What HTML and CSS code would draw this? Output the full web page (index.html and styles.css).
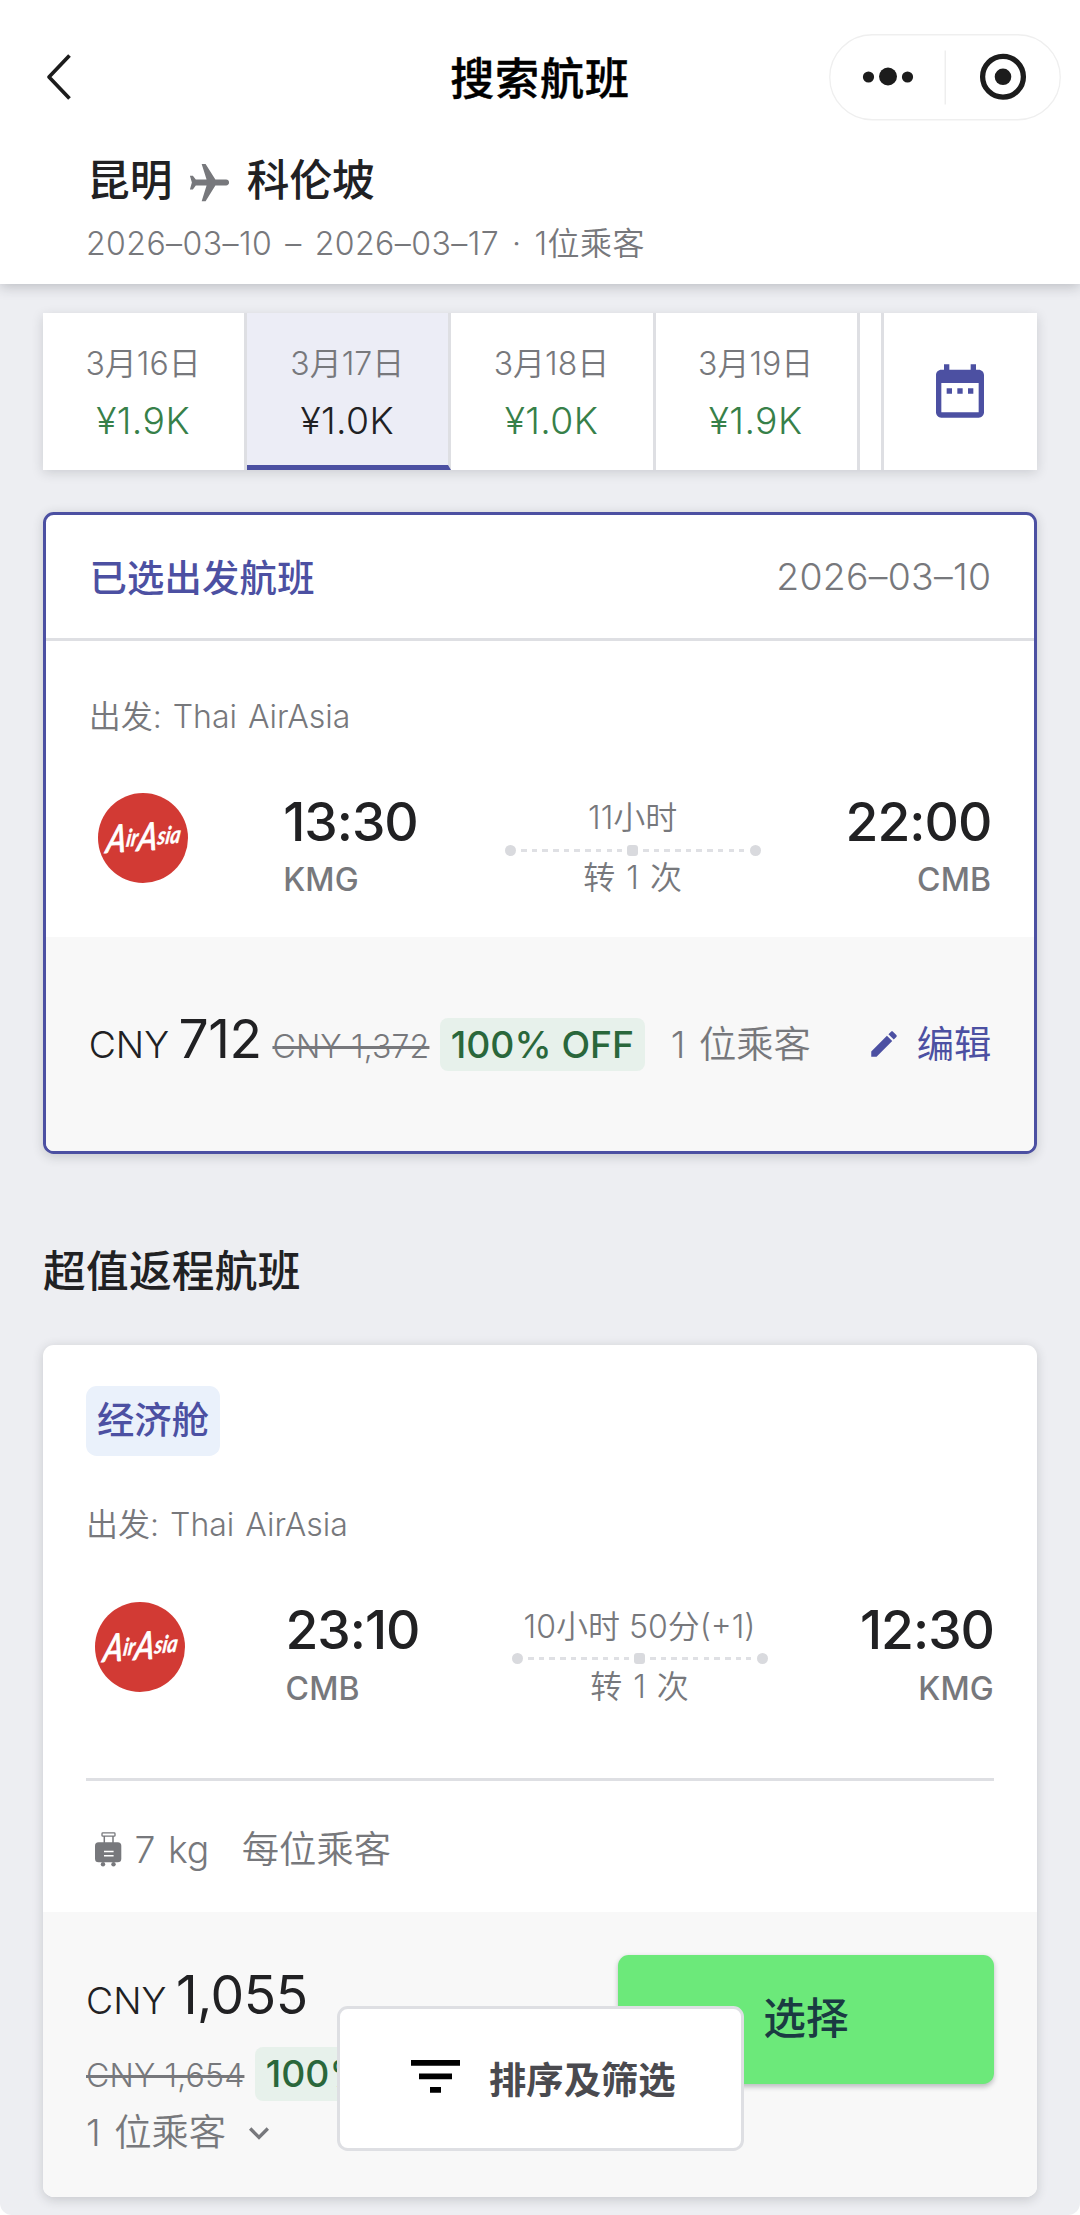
FILE: index.html
```html
<!DOCTYPE html>
<html lang="zh-CN">
<head>
<meta charset="utf-8">
<title>搜索航班</title>
<link rel="stylesheet" href="styles.css">
</head>
<body>
<div class="app">
  <header class="header">
    <div class="nav">
      <svg class="back" width="26" height="48" viewBox="0 0 26 48" fill="none" stroke="#1c1c1c" stroke-width="3.7"><path d="M23.5 2.5 3 24l20.500 21.500" stroke-linejoin="round"/></svg>
      <h1 class="nav-title">搜索航班</h1>
      <svg class="capsule" width="232" height="87" viewBox="0 0 232 87">
        <rect x=".75" y=".75" width="230.500" height="85" rx="42.500" fill="none" stroke="#efefef" stroke-width="1.300"/>
        <g fill="#1c1c1c"><circle cx="39.500" cy="43" r="5.600"/><circle cx="59" cy="42.500" r="9"/><circle cx="78.500" cy="43" r="5.600"/><circle cx="174" cy="42.800" r="8.300"/></g>
        <path d="M116.300 16.500v54" stroke="#eee" stroke-width="1.500"/>
        <circle cx="174" cy="42.800" r="20.400" fill="none" stroke="#1c1c1c" stroke-width="5.300"/>
      </svg>
    </div>
    <div class="route">
      <span>昆明</span>
      <svg class="plane" width="47" height="47" viewBox="0 0 24 24"><path transform="rotate(90 12 12)" d="M21 16v-2l-8-5V3.500c0-.83-.67-1.500-1.500-1.500S10 2.670 10 3.500V9l-8 5v2l8-2.500V19l-2 1.500V22l3.500-1 3.500 1v-1.500L13 19v-5.500l8 2.500z" fill="#77787c"/></svg>
      <span>科伦坡</span>
    </div>
    <p class="summary">2026–03–10 – 2026–03–17 · 1位乘客</p>
  </header>

  <main class="main">
    <div class="dates">
      <div class="date"><span class="day">3月16日</span><span class="fare">¥1.9K</span></div>
      <div class="date date-on"><span class="day">3月17日</span><span class="fare">¥1.0K</span></div>
      <div class="date"><span class="day">3月18日</span><span class="fare">¥1.0K</span></div>
      <div class="date"><span class="day">3月19日</span><span class="fare">¥1.9K</span></div>
      <div class="date-rest"></div>
      <div class="calendar"><svg width="64" height="64" viewBox="0 0 24 24" fill="#4c50a2"><path d="M9 11H7v2h2v-2zm4 0h-2v2h2v-2zm4 0h-2v2h2v-2zm2-7h-1V2h-2v2H8V2H6v2H5c-1.110 0-1.990.9-1.990 2L3 20c0 1.100.89 2 2 2h14c1.100 0 2-.9 2-2V6c0-1.100-.9-2-2-2zm0 16H5V9h14v11z"/></svg></div>
    </div>

    <section class="card card-picked">
      <div class="picked-head"><h2 class="picked-title">已选出发航班</h2><span class="picked-date">2026–03–10</span></div>
      <div class="picked-body">
        <p class="carrier">出发: Thai AirAsia</p>
        <div class="leg">
          <svg class="logo" width="90" height="90" viewBox="0 0 90 90">
            <circle cx="45" cy="45" r="45" fill="#d23a34"/>
            <g transform="translate(8 55) rotate(-4) skewX(-12)"><text class="logo-text" textLength="74" lengthAdjust="spacingAndGlyphs"><tspan class="logo-cap" dy="5">A</tspan><tspan dy="-5">ir</tspan><tspan class="logo-cap" dy="5">A</tspan><tspan dy="-5">sia</tspan></text></g>
          </svg>
          <div class="stop"><span class="time">13:30</span><span class="code">KMG</span></div>
          <div class="path"><span>11小时</span><div class="line"><i class="dot"></i><i class="dash"></i><i class="dot dot-mid"></i><i class="dash"></i><i class="dot"></i></div><span class="via">转 1 次</span></div>
          <div class="stop stop-end"><span class="time">22:00</span><span class="code">CMB</span></div>
        </div>
      </div>
      <div class="picked-foot">
        <span class="currency">CNY</span><span class="amount">712</span><s class="was">CNY 1,372</s><span class="badge">100% OFF</span><span class="pax">1 位乘客</span>
        <a class="edit"><svg class="pencil" width="34" height="34" viewBox="0 0 24 24"><path d="M3 17.250V21h3.750L17.810 9.940l-3.750-3.750L3 17.250zM20.710 7.040c.39-.39.39-1.020 0-1.410l-2.340-2.340c-.39-.39-1.020-.39-1.410 0l-1.830 1.830 3.750 3.750 1.830-1.830z" fill="#4c50a2"/></svg>编辑</a>
      </div>
    </section>

    <h2 class="section-title">超值返程航班</h2>

    <section class="card card-offer">
      <div class="offer-body">
        <span class="cabin">经济舱</span>
        <p class="carrier">出发: Thai AirAsia</p>
        <div class="leg leg-wide">
          <svg class="logo" width="90" height="90" viewBox="0 0 90 90">
            <circle cx="45" cy="45" r="45" fill="#d23a34"/>
            <g transform="translate(8 55) rotate(-4) skewX(-12)"><text class="logo-text" textLength="74" lengthAdjust="spacingAndGlyphs"><tspan class="logo-cap" dy="5">A</tspan><tspan dy="-5">ir</tspan><tspan class="logo-cap" dy="5">A</tspan><tspan dy="-5">sia</tspan></text></g>
          </svg>
          <div class="stop"><span class="time">23:10</span><span class="code">CMB</span></div>
          <div class="path"><span>10小时 50分(+1)</span><div class="line"><i class="dot"></i><i class="dash"></i><i class="dot dot-mid"></i><i class="dash"></i><i class="dot"></i></div><span class="via">转 1 次</span></div>
          <div class="stop stop-end"><span class="time">12:30</span><span class="code">KMG</span></div>
        </div>
        <div class="bags">
          <svg width="27" height="35" viewBox="0 0 27 35"><rect x="7" y=".9" width="13" height="3.300" rx=".8" fill="none" stroke="#77787c" stroke-width="1.300"/><path d="M9.300 4v7M18 4v7" stroke="#77787c" stroke-width="1.500"/><rect y="10.300" width="26.300" height="20" rx="3.600" fill="#77787c"/><circle cx="8" cy="32.300" r="2.200" fill="#77787c"/><circle cx="18.500" cy="32.300" r="2.200" fill="#77787c"/><path d="M9 19.500h9.600M9 23.800h9.600" stroke="#fff" stroke-width="1.500"/></svg>
          <span class="weight">7 kg</span><span>每位乘客</span>
        </div>
      </div>
      <div class="offer-foot">
        <div class="offer-price">
          <div class="price-row"><span class="currency">CNY</span><span class="amount">1,055</span></div>
          <div class="price-row price-was"><s class="was">CNY 1,654</s><span class="badge">100% OFF</span></div>
          <div class="pax-row"><span>1 位乘客</span><svg width="40" height="40" viewBox="0 0 24 24"><path d="M16.590 8.590 12 13.170 7.410 8.590 6 10l6 6 6-6z" fill="#77787c"/></svg></div>
        </div>
        <button class="select">选择</button>
      </div>
    </section>
  </main>

  <button class="filter"><svg width="49" height="33" viewBox="0 0 49 33"><path d="M0 0h49v5.700H0zM8 13.500h33v5.700H8zM19 27h11v5.700H19z"/></svg>排序及筛选</button>
</div>
</body>
</html>
```
FILE: styles.css
```css
* { box-sizing: border-box; }
body {
  margin: 0;
  background: #fff;
  color: #212123;
  font-family: Inter, "Noto Sans CJK SC", sans-serif;
  font-weight: 350;
}
h1, h2, p { margin: 0; font-weight: 500; }
button { font-family: inherit; }
svg { display: block; flex: none; }
.app {
  position: relative;
  width: 1080px;
  height: 2215px;
  overflow: hidden;
  border-radius: 0 0 12px 12px;
  background: #edeef2;
}

/* header */
.header {
  position: relative;
  height: 284px;
  padding-top: 34px;
  background: #fff;
  box-shadow: 0 3px 12px rgba(37, 42, 49, .24);
}
.nav { display: grid; grid-template-columns: 1fr auto 1fr; align-items: center; height: 87px; }
.back { margin: 0 0 1px 46px; }
.nav-title { padding-top: 2px; color: #000; font-size: 44px; line-height: 60px; letter-spacing: .9px; font-weight: 500; -webkit-text-stroke: .4px #000; }
.capsule { margin-right: 19px; justify-self: end; }
.route { display: flex; align-items: center; height: 60px; margin-top: 30px; padding-left: 87px; font-size: 42.670px; font-weight: 500; line-height: 60px; }
.plane { margin: 4px 14px 0 13.500px; }
.summary { margin-top: 9px; padding-left: 86px; color: #77787c; font-size: 32px; font-weight: 350; line-height: 48px; letter-spacing: .45px; word-spacing: 3.500px; }

/* date strip */
.main { padding: 29.300px 43px 0; }
.dates { display: flex; height: 156.300px; background: #fff; box-shadow: 0 2.670px 11px rgba(37, 42, 49, .17); }
.date { display: flex; flex-direction: column; align-items: center; gap: 5px; width: 204.200px; padding-top: 27px; border-right: 3px solid #dedfe3; }
.date-on { border-bottom: 5.500px solid #4c50a2; background: #ecedf6; }
.day { margin-right: 1px; color: #77787c; font-size: 32px; line-height: 48px; }
.fare { margin-right: 1px; color: #378049; font-size: 37.330px; line-height: 56px; letter-spacing: .4px; }
.date-on .fare { color: #212123; }
.date-rest { width: 21px; }
.calendar { display: flex; flex: 1; align-items: center; justify-content: center; border-left: 3px solid #dedfe3; }

/* cards */
.card { overflow: hidden; border-radius: 10.670px; background: #fff; box-shadow: 0 2.670px 11px rgba(37, 42, 49, .19); }
.card-picked { height: 642px; margin-top: 42.670px; border: 3px solid #4c50a2; }
.picked-head { display: flex; align-items: center; justify-content: space-between; height: 126px; padding: 0 42.670px 0 43.500px; border-bottom: 3px solid #dedfe3; }
.picked-title { padding-bottom: 2px; color: #4c50a2; font-size: 37.330px; letter-spacing: .2px; }
.picked-date { color: #77787c; font-size: 37.330px; letter-spacing: .3px; }
.picked-body { height: 295.700px; padding: 51.300px 42.670px 0; }
.carrier { color: #77787c; font-size: 32px; font-weight: 350; line-height: 48px; word-spacing: 2px; }
.leg { display: grid; grid-template-columns: 194.500px 221.500px 256px 1fr; align-items: start; margin-top: 49px; }
.leg-wide { grid-template-columns: 199.500px 226px 256px 1fr; margin-top: 49px; }
.logo { margin: 3.500px 0 0 9px; }
.logo-text { font: italic 700 24px Lato, sans-serif; fill: #fff; stroke: #fff; stroke-width: .4px; }
.logo-cap { font-size: 38px; font-weight: 400; stroke-width: 1px; }
.stop { display: flex; flex-direction: column; gap: 2.600px; }
.stop-end { align-items: flex-end; }
.time { font-size: 53.330px; font-weight: 500; line-height: 64px; letter-spacing: -1px; }
.code { color: #77787c; font-size: 32px; font-weight: 460; line-height: 48px; letter-spacing: .2px; }
.path { display: flex; flex-direction: column; align-items: center; padding-top: 8.700px; color: #77787c; font-size: 32px; line-height: 40px; white-space: nowrap; }
.via { word-spacing: 2px; }
.line { display: flex; align-items: center; justify-content: space-between; width: 256px; height: 11px; margin: 6.300px 0 2.300px; }
.dot { width: 11px; height: 11px; border-radius: 50%; background: #d9dade; }
.dot-mid { border-radius: 3px; }
.dash { width: 101px; height: 3px; background: repeating-linear-gradient(90deg, #dfe0e4 0 5.600px, transparent 5.600px 10.700px); }

/* prices */
.picked-foot { display: flex; align-items: baseline; height: 216px; padding: 70px 42.670px 0; background: #f8f8f8; }
.currency { font-size: 37.330px; }
.amount { margin-left: 9.500px; font-size: 53.330px; font-weight: 380; line-height: 64px; letter-spacing: -.5px; }
.was { color: #77787c; font-size: 32px; text-decoration-thickness: 2.670px; letter-spacing: .15px; }
.picked-foot .was { margin-left: 11px; }
.badge { margin-left: 10.670px; padding: 0 10.670px; border-radius: 8px; background: #e7f1eb; color: #2a673b; font-size: 37.330px; font-weight: 550; line-height: 53.330px; white-space: nowrap; }
.pax { margin-left: 26px; color: #77787c; font-size: 37.330px; word-spacing: 3px; white-space: nowrap; }
.edit { margin-left: auto; color: #4c50a2; font-size: 37.330px; font-weight: 400; white-space: nowrap; }
.pencil { display: inline-block; margin-right: 15.500px; vertical-align: -3.300px; }

.section-title { margin: 86px 0 40.700px; font-size: 42.670px; line-height: 64px; letter-spacing: .3px; }

/* offer */
.card-offer { height: 852px; }
.offer-body { height: 567px; padding: 40.700px 43px 0; }
.cabin { display: block; width: 134px; margin-bottom: 45.600px; border-radius: 10.670px; background: #eaf1fb; color: #4c50a2; font-size: 37.330px; font-weight: 500; line-height: 70px; text-align: center; }
.bags { display: flex; align-items: center; margin-top: 65px; padding: 41px 0 0 8.500px; border-top: 3px solid #dedfe3; color: #77787c; font-size: 37.330px; line-height: 56px; }
.weight { margin: 0 32.500px 0 13px; word-spacing: 2px; }
.offer-foot { display: flex; align-items: flex-start; justify-content: space-between; height: 285px; padding: 43px 43px 0; background: #f8f8f8; }
.offer-price { padding-top: 8.500px; }
.price-row { display: flex; align-items: baseline; }
.price-was { margin-top: 20px; }
.pax-row { display: flex; align-items: center; gap: 12.500px; margin-top: 4px; color: #77787c; font-size: 37.330px; line-height: 56px; word-spacing: 3px; }
.select { width: 376px; height: 129.500px; padding: 0 0 8px; border: 0; border-radius: 10.670px; background: #6ce97a; box-shadow: 0 2.670px 5px rgba(37, 42, 49, .28); color: #1a3b42; font-size: 42.670px; font-weight: 500; }
.filter {
  position: absolute;
  bottom: 64px;
  left: 336.500px;
  display: flex;
  align-items: center;
  gap: 29px;
  width: 407px;
  height: 145px;
  padding: 0 0 1px 71.500px;
  border: 3px solid #dedfe3;
  border-radius: 10.670px;
  background: #fff;
  color: #4a4a4f;
  font-size: 37.330px;
  font-weight: 600;
}
.filter svg { margin-bottom: 4px; }
```
